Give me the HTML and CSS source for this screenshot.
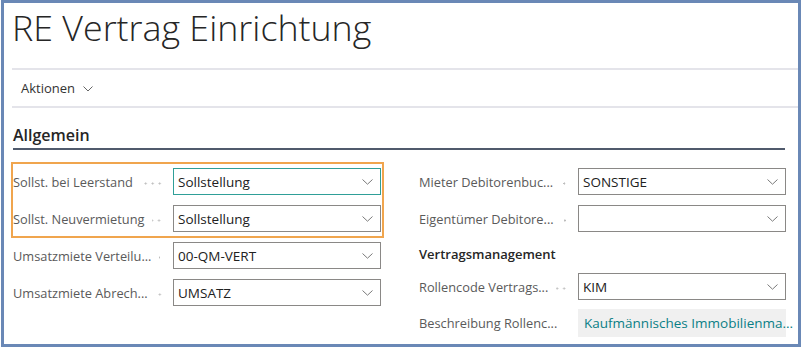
FILE: index.html
```html
<!DOCTYPE html>
<html lang="de">
<head>
<meta charset="utf-8">
<title>RE Vertrag Einrichtung</title>
<link rel="stylesheet" href="styles.css">
</head>
<body>
<div class="frame">
  <header class="title-area">
    <h1 class="page-title">RE Vertrag Einrichtung</h1>
  </header>
  <nav class="actionbar">
    <span class="action">Aktionen</span>
    <svg class="action-chev" width="10" height="6" viewBox="0 0 10 6"><path d="M0.5 0.5 L5 5 L9.5 0.5" fill="none" stroke="#666" stroke-width="1"/></svg>
  </nav>
  <section class="fasttab">
    <h2 class="fasttab-title">Allgemein</h2>
    <div class="grid">
      <div class="col">
        <div class="highlight">
          <div class="row">
            <span class="label">Sollst. bei Leerstand</span><span class="leader"></span>
            <div class="input focused"><span class="value">Sollstellung</span><svg class="chev" width="11" height="6" viewBox="0 0 11 6"><path d="M0.5 0.5 L5.5 5.2 L10.5 0.5" fill="none" stroke="#7a7a7a" stroke-width="1"/></svg></div>
          </div>
          <div class="row">
            <span class="label">Sollst. Neuvermietung</span><span class="leader"></span>
            <div class="input"><span class="value">Sollstellung</span><svg class="chev" width="11" height="6" viewBox="0 0 11 6"><path d="M0.5 0.5 L5.5 5.2 L10.5 0.5" fill="none" stroke="#7a7a7a" stroke-width="1"/></svg></div>
          </div>
        </div>
        <div class="row">
          <span class="label">Umsatzmiete Verteilu...</span><span class="leader"></span>
          <div class="input"><span class="value">00-QM-VERT</span><svg class="chev" width="11" height="6" viewBox="0 0 11 6"><path d="M0.5 0.5 L5.5 5.2 L10.5 0.5" fill="none" stroke="#7a7a7a" stroke-width="1"/></svg></div>
        </div>
        <div class="row">
          <span class="label">Umsatzmiete Abrech...</span><span class="leader"></span>
          <div class="input"><span class="value">UMSATZ</span><svg class="chev" width="11" height="6" viewBox="0 0 11 6"><path d="M0.5 0.5 L5.5 5.2 L10.5 0.5" fill="none" stroke="#7a7a7a" stroke-width="1"/></svg></div>
        </div>
      </div>
      <div class="col">
        <div class="row">
          <span class="label">Mieter Debitorenbuc...</span><span class="leader"></span>
          <div class="input"><span class="value">SONSTIGE</span><svg class="chev" width="11" height="6" viewBox="0 0 11 6"><path d="M0.5 0.5 L5.5 5.2 L10.5 0.5" fill="none" stroke="#7a7a7a" stroke-width="1"/></svg></div>
        </div>
        <div class="row">
          <span class="label">Eigentümer Debitore...</span><span class="leader"></span>
          <div class="input"><span class="value"></span><svg class="chev" width="11" height="6" viewBox="0 0 11 6"><path d="M0.5 0.5 L5.5 5.2 L10.5 0.5" fill="none" stroke="#7a7a7a" stroke-width="1"/></svg></div>
        </div>
        <h3 class="group-title">Vertragsmanagement</h3>
        <div class="row">
          <span class="label">Rollencode Vertrags...</span><span class="leader"></span>
          <div class="input"><span class="value">KIM</span><svg class="chev" width="11" height="6" viewBox="0 0 11 6"><path d="M0.5 0.5 L5.5 5.2 L10.5 0.5" fill="none" stroke="#7a7a7a" stroke-width="1"/></svg></div>
        </div>
        <div class="row row-ro">
          <span class="label">Beschreibung Rollenc...</span><span class="leader"></span>
          <div class="input readonly"><span class="value">Kaufmännisches Immobilienma...</span></div>
        </div>
      </div>
    </div>
  </section>
</div>
</body>
</html>
```

FILE: styles.css
```css
* { box-sizing: border-box; }
html, body { margin: 0; padding: 0; background: #ffffff; }
body { font-family: "Open Sans", "Noto Sans", sans-serif; color: #212121; }

.frame {
  margin-left: 1px;
  width: 800px;
  height: 347px;
  border: 3px solid #6a88b6;
  background: #ffffff;
  overflow: hidden;
}

.title-area {
  margin-left: 8px;
  height: 67px;
  border-bottom: 2px solid #e4e4ea;
  padding-top: 0;
}
.page-title {
  margin: 0;
  padding-left: 0;
  font-weight: 300;
  font-size: 35.8px;
  line-height: 48px;
  color: #262626;
  letter-spacing: 0;
}

.actionbar {
  margin-left: 8px;
  height: 38px;
  border-bottom: 2px solid #e4e4ea;
  display: flex;
  align-items: center;
  padding-left: 9px;
  gap: 8px;
}
.action { font-size: 13px; color: #333333; }
.action-chev { margin-top: 1px; }

.fasttab {
  padding: 16px 13px 0 9px;
}
.fasttab-title {
  margin: 0;
  font-size: 16px;
  font-weight: 600;
  line-height: 22px;
  color: #262626;
  padding-bottom: 2px;
  border-bottom: 2px solid #505a6c;
}

.grid {
  margin-top: 18px;
  display: grid;
  grid-template-columns: 368px 367px;
  column-gap: 38px;
}
.col {
  display: flex;
  flex-direction: column;
  gap: 10px;
}
.highlight {
  display: flex;
  flex-direction: column;
  gap: 10px;
  border: 2px solid #f0a54e;
  margin: -6px -3px -6px -2px;
  padding: 4px 1px 4px 0;
}

.row {
  display: flex;
  align-items: center;
  height: 27px;
}
.label {
  flex: none;
  font-size: 12.8px;
  color: #5a5a5a;
  white-space: nowrap;
}
.leader {
  flex: 1;
  align-self: stretch;
  margin: 0 10px 0 8px;
  background-image: radial-gradient(circle, #bcbcbc 0.8px, rgba(255,255,255,0) 1.3px);
  background-size: 7px 100%;
  background-repeat: repeat-x;
  background-position: right 0 top 2px;
}
.input {
  flex: none;
  width: 208px;
  height: 27px;
  border: 1px solid #8a8886;
  display: flex;
  align-items: center;
  justify-content: space-between;
  padding: 0 7px 0 4px;
  background: #ffffff;
}
.input.focused { border-color: #2f9f98; }
.value {
  font-size: 13.5px;
  color: #212121;
  white-space: nowrap;
}
.chev { flex: none; }

.group-title {
  margin: 2px 0 -2px;
  font-size: 13px;
  font-weight: 600;
  line-height: 21px;
  color: #262626;
}
.row-ro { margin-top: -1px; height: 28px; }
.input.readonly {
  height: 28px;
  border-color: #f0f0f0;
  background: #f0f0f0;
  padding-left: 5px;
}
.input.readonly .value { color: #0a7f86; font-size: 13.5px; }
```
